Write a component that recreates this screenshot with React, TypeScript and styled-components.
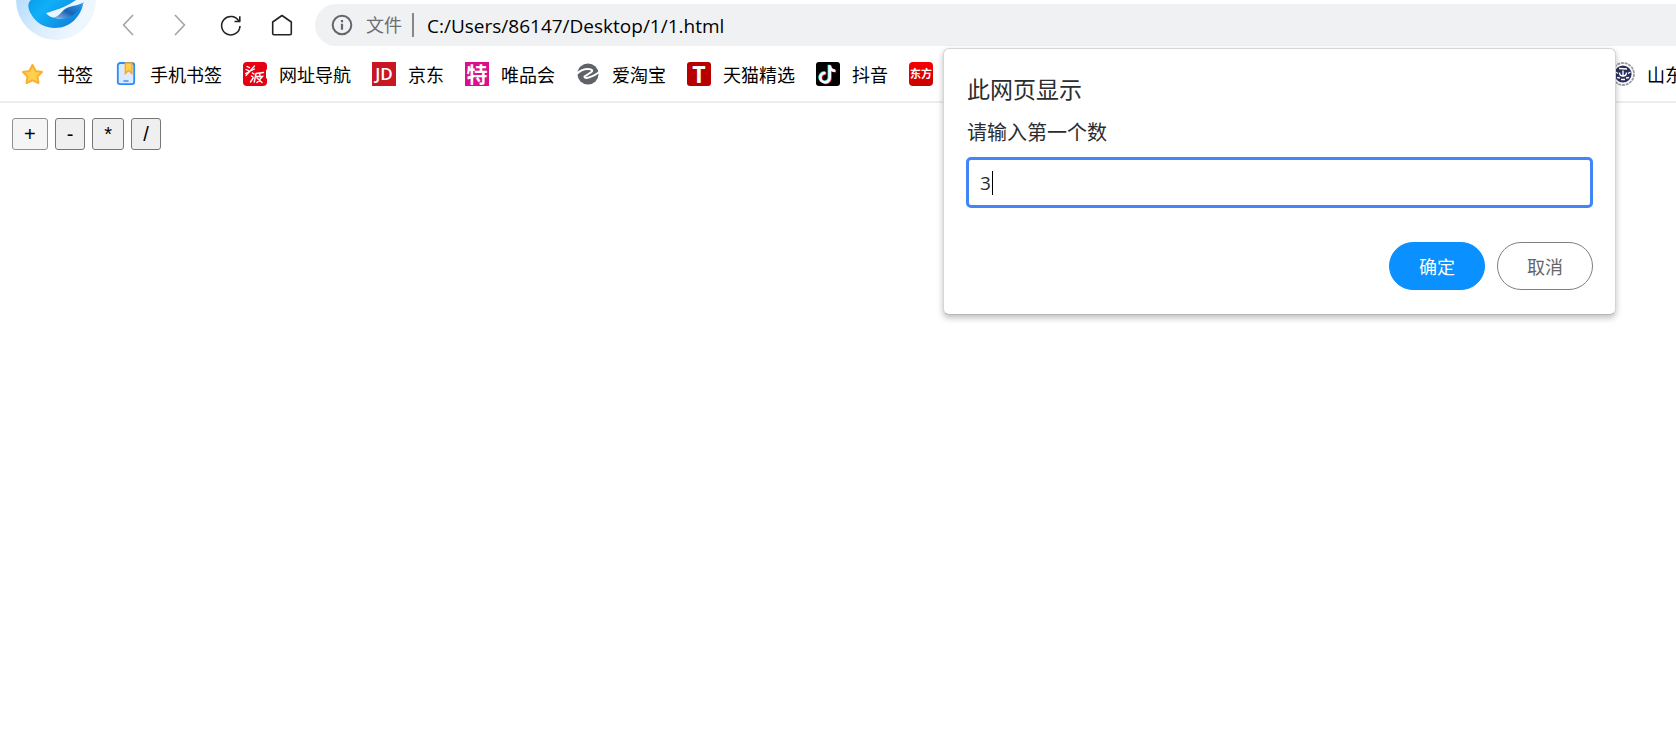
import React, { useState } from "react";
import styled, { createGlobalStyle, css } from "styled-components";

const uiFont = `"Open Sans", "Noto Sans CJK SC", sans-serif`;

const GlobalStyle = createGlobalStyle`
  *, *::before, *::after { box-sizing: border-box; }
  body { margin: 0; background: #fff; color: #000; font-family: ${uiFont}; }
  button, input { font-family: inherit; }
`;

const Browser = styled.div`
  position: relative;
  min-height: 100vh;
  overflow: hidden;
`;

const Toolbar = styled.header`
  display: flex;
  align-items: flex-start;
  height: 48px;
  padding-left: 16px;
`;

const LogoSvg = styled.svg`
  flex: none;
  display: block;
`;

const NavGroup = styled.nav`
  display: flex;
  gap: 27px;
  padding: 13px 21px 0;
`;

const NavButton = styled.button<{ $muted?: boolean }>`
  display: flex;
  width: 24px;
  height: 24px;
  padding: 0;
  border: 0;
  background: none;
  color: ${(p) => (p.$muted ? "#a3a3a3" : "#222")};
`;

const AddressBar = styled.div`
  flex: 1;
  display: flex;
  align-items: center;
  height: 42px;
  margin-top: 4px;
  padding-left: 16px;
  border-radius: 21px 0 0 21px;
  background: #f0f1f3;
`;

const Scheme = styled.label`
  margin-left: 13px;
  padding-right: 10px;
  border-right: 2px solid #86888b;
  color: #6b6d70;
  font-size: 18px;
  line-height: 24px;
`;

const UrlInput = styled.input`
  flex: 1;
  min-width: 0;
  margin-left: 13px;
  padding: 2px 0 0;
  border: 0;
  outline: 0;
  background: none;
  color: #000;
  font-size: 19px;
  line-height: 24px;
`;

const BookmarkBar = styled.nav`
  display: flex;
  justify-content: space-between;
  height: 55px;
  padding-left: 21px;
  border-bottom: 2px solid #ececec;
`;

const BookmarkList = styled.div`
  display: flex;
  gap: 21px;
`;

const Bookmark = styled.a<{ $clipped?: boolean }>`
  display: flex;
  align-items: center;
  gap: 12px;
  height: 52px;
  color: #000;
  font-size: 18px;
  line-height: 24px;
  white-space: nowrap;
  text-decoration: none;
  ${(p) =>
    p.$clipped &&
    css`
      width: 65px;
      overflow: hidden;
    `}
  svg { flex: none; }
`;

const BookmarkName = styled.span`
  padding-top: 2px;
`;

const Tile = styled.span<{ $bg: string; $size: number; $radius: number; $weight?: number }>`
  display: grid;
  place-items: center;
  flex: none;
  width: 24px;
  height: 24px;
  border-radius: ${(p) => p.$radius}px;
  background: ${(p) => p.$bg};
  color: #fff;
  font-size: ${(p) => p.$size}px;
  font-weight: ${(p) => p.$weight ?? 700};
  line-height: 24px;
`;

const Page = styled.main`
  display: flex;
  gap: 7px;
  padding: 15px 12px;
`;

const OperatorButton = styled.button`
  height: 32px;
  padding: 0 11px;
  border: 1px solid #767676;
  border-radius: 3px;
  background: #efefef;
  color: #000;
  font-family: "Liberation Sans", sans-serif;
  font-size: 20px;
  &:first-child {
    border-color: #8f8f8f;
    background: #f5f5f5;
  }
`;

const Dialog = styled.form`
  position: absolute;
  top: 48px;
  right: 60px;
  width: 673px;
  padding: 22px 22px 24px;
  border: 1px solid #d5d5d5;
  border-bottom-color: #b5b7b6;
  border-radius: 6px;
  background: #fff;
  box-shadow: 0 3px 6px rgba(0, 0, 0, 0.25);
`;

const DialogTitle = styled.h1`
  margin: 0;
  padding-left: 1px;
  color: #2b2c2e;
  font-size: 23px;
  font-weight: 400;
  line-height: 36px;
`;

const DialogLabel = styled.label`
  display: block;
  padding: 10px 1px 8px;
  color: #2b2c2e;
  font-size: 20px;
  line-height: 32px;
`;

const Field = styled.div`
  display: flex;
  align-items: center;
  height: 51px;
  padding: 0 11px;
  border: 3px solid #4285f4;
  border-radius: 5px;
`;

const FieldInput = styled.input`
  field-sizing: content;
  max-width: 100%;
  padding: 0;
  border: 0;
  outline: 0;
  color: #2b2c2e;
  font-size: 19px;
  line-height: 24px;
`;

const Caret = styled.span`
  width: 1px;
  height: 24px;
  margin-left: 1px;
  background: #000;
`;

const Actions = styled.div`
  display: flex;
  justify-content: flex-end;
  gap: 12px;
  padding-top: 34px;
`;

const ActionButton = styled.button<{ $primary?: boolean }>`
  width: 96px;
  height: 48px;
  padding: 2px 0 0;
  border: 1px solid ${(p) => (p.$primary ? "#0a90ff" : "#808080")};
  border-radius: 24px;
  background: ${(p) => (p.$primary ? "#0a90ff" : "#fff")};
  color: ${(p) => (p.$primary ? "#fff" : "#666")};
  font-size: 18px;
  line-height: 24px;
`;

const Logo = () => (
  <LogoSvg width="80" height="41" viewBox="0 0 80 41" aria-hidden="true">
    <defs>
      <linearGradient id="halo" gradientUnits="userSpaceOnUse" x1="4" y1="0" x2="60" y2="32">
        <stop offset="0" stopColor="#b9defc" />
        <stop offset="0.45" stopColor="#d9ecfd" />
        <stop offset="1" stopColor="#eff7fe" />
      </linearGradient>
      <linearGradient id="swirl" x1="0" y1="0" x2="1" y2="0.5">
        <stop offset="0" stopColor="#0a9cec" />
        <stop offset="0.35" stopColor="#0fb0f8" />
        <stop offset="1" stopColor="#1283dc" />
      </linearGradient>
      <linearGradient id="hook" x1="0" y1="1" x2="1" y2="0">
        <stop offset="0" stopColor="#8fc4ee" />
        <stop offset="0.45" stopColor="#1a62b4" />
        <stop offset="1" stopColor="#2f9df0" />
      </linearGradient>
    </defs>
    <circle cx="40" cy="0" r="40" fill="url(#halo)" />
    <path d="M15 0C11 3 12 9 15 14C20 23 29 28 39 28C54 28 65 17 67.500 2L60 0Z" fill="url(#swirl)" />
    <path d="M30 13C38 11 50 7 60 0H68L67.500 3C62 12 53 19 42 18.500C36 18 32 16 30 13Z" fill="#eaf5fe" />
    <path d="M37 17.500C44 17 45 10 53 7C58 5.500 63 5 67.500 2.500C64 11 55 19 45 18.700C42 18.600 39 18.200 37 17.500Z" fill="url(#hook)" />
  </LogoSvg>
);

const LineIcon = ({ d }: { d: string }) => (
  <svg width="24" height="24" viewBox="0 0 24 24" fill="none" stroke="currentColor" strokeWidth="1.6" strokeLinejoin="round" aria-hidden="true">
    <path d={d} />
  </svg>
);

const InfoIcon = () => (
  <svg width="22" height="22" viewBox="0 0 22 22" fill="none" stroke="#63666a" strokeWidth="2" aria-hidden="true">
    <circle cx="11" cy="11" r="9.3" />
    <path d="M11 9.8v6M11 6v2.2" strokeWidth="2.2" />
  </svg>
);

const StarIcon = () => (
  <svg width="24" height="24" viewBox="0 0 24 24" aria-hidden="true">
    <path d="M11.500 3L14.600 9L21 10L16.500 14.600L17.500 21L11.500 18.300L5.500 21L6.500 14.600L2 10L8.400 9Z" fill="#ffd04a" stroke="#fbaf35" strokeWidth="2" strokeLinejoin="round" />
  </svg>
);

const PhoneIcon = () => (
  <svg width="24" height="24" viewBox="0 0 24 24" aria-hidden="true">
    <rect x="3.800" y="1" width="16.400" height="21.200" rx="2.400" fill="#dce9fe" stroke="#2a8cf8" strokeWidth="1.800" />
    <path d="M11.300 1h6.600v10.500l-3.300-3-3.300 3Z" fill="#ffcf4d" stroke="#f5a623" strokeWidth="1.300" />
    <path d="M9.500 19h5" stroke="#2a8cf8" strokeWidth="1.400" />
  </svg>
);

const HeadlineIcon = () => (
  <svg width="24" height="24" viewBox="0 0 24 24" fill="none" stroke="#fff" strokeLinecap="round" aria-hidden="true">
    <rect width="24" height="24" rx="4" fill="#e60012" stroke="none" />
    <path d="M4 4.500l2.500 1.200M3 7.500l2.500 1.200M11.500 4L3 13.500M2.500 11.500L11.500 7" strokeWidth="1.300" />
    <path d="M9.500 11l1.500 1M8.500 14l1.500 1M7.500 20l2.700-4M13 11.500L11.300 20M13 11.500l7.500-1M13 14.500h6.500l-5.500 6M14 16l5 4.500M16.800 11v4" strokeWidth="1.400" />
    <path d="M23.500 8v8" strokeWidth="1" />
  </svg>
);

const TaobaoIcon = () => (
  <svg width="24" height="24" viewBox="0 0 24 24" aria-hidden="true">
    <ellipse cx="12" cy="12" rx="10.600" ry="10.500" fill="#5f6368" />
    <path d="M0 12.500C4 8.500 8 7 12 7C16.500 7 17 8.800 15 10.300L8.500 14.500C8 17 15 16.500 24 9.500" fill="none" stroke="#fff" strokeWidth="2" />
  </svg>
);

const DouyinIcon = () => (
  <svg width="24" height="24" viewBox="0 0 24 24" fill="none" strokeWidth="2.600" aria-hidden="true">
    <rect width="24" height="24" rx="3" fill="#000" />
    <path d="M12.900 2.800V14.800A4.700 4.700 0 1 1 8.700 10.500M12.900 3.500C13.300 6.500 15.500 8.300 18.500 8.300" stroke="#25f4ee" />
    <path d="M14.500 3.800V15.800A4.700 4.700 0 1 1 10.300 11.500M14.500 4.500C14.900 7.500 17.100 9.300 20.100 9.300" stroke="#fe2c55" />
    <path d="M13.700 3.300V15.300A4.700 4.700 0 1 1 9.500 11M13.700 4C14.100 7 16.300 8.800 19.300 8.800" stroke="#fff" />
  </svg>
);

const SealIcon = () => (
  <svg width="24" height="24" viewBox="0 0 24 24" fill="none" aria-hidden="true">
    <circle cx="12" cy="12" r="11" stroke="#9b9ba1" strokeWidth="1.800" strokeDasharray="3 0.800" />
    <circle cx="12" cy="12" r="8.600" fill="#2a3059" />
    <path d="M8.500 10.500C8.500 13 10 14 12 14C14 14 15.500 13 15.500 10.500M12 8.500V14M6 15.500l3 .5M18 15.500l-3 .5M8 6.500l8 .5M4.500 10l2.500 1.500M19.500 10L17 11.500M10 17.500h4" stroke="#fff" strokeWidth="1.400" />
  </svg>
);

const bookmarks: { name: string; icon: React.ReactNode }[] = [
  { name: "书签", icon: <StarIcon /> },
  { name: "手机书签", icon: <PhoneIcon /> },
  { name: "网址导航", icon: <HeadlineIcon /> },
  { name: "京东", icon: <Tile $bg="#c81623" $size={17} $radius={0} $weight={600}>JD</Tile> },
  { name: "唯品会", icon: <Tile $bg="#dd0e8c" $size={21} $radius={0}>特</Tile> },
  { name: "爱淘宝", icon: <TaobaoIcon /> },
  { name: "天猫精选", icon: <Tile $bg="#b80000" $size={23} $radius={3}>T</Tile> },
  { name: "抖音", icon: <DouyinIcon /> },
  { name: "", icon: <Tile $bg="linear-gradient(#f80000, #c80000)" $size={11} $radius={4}>东方</Tile> },
];

export default function App() {
  const [url, setUrl] = useState("C:/Users/86147/Desktop/1/1.html");
  const [value, setValue] = useState("3");

  return (
    <Browser>
      <GlobalStyle />
      <Toolbar>
        <Logo />
        <NavGroup>
          <NavButton type="button" aria-label="后退" $muted><LineIcon d="M16 2L6.500 12L16 22" /></NavButton>
          <NavButton type="button" aria-label="前进" $muted><LineIcon d="M7 2L16.500 12L7 22" /></NavButton>
          <NavButton type="button" aria-label="刷新"><LineIcon d="M20 8.500A9.200 9.200 0 1 0 21 13M20.800 3.200V8.500H15.500" /></NavButton>
          <NavButton type="button" aria-label="主页"><LineIcon d="M12 2.500L21.300 9V20.500Q21.300 21.700 20.100 21.700H3.900Q2.700 21.700 2.700 20.500V9Z" /></NavButton>
        </NavGroup>
        <AddressBar>
          <InfoIcon />
          <Scheme htmlFor="url">文件</Scheme>
          <UrlInput id="url" value={url} onChange={(e) => setUrl(e.target.value)} />
        </AddressBar>
      </Toolbar>
      <BookmarkBar>
        <BookmarkList>
          {bookmarks.map((b, i) => (
            <Bookmark key={i} href="#">
              {b.icon}
              {b.name && <BookmarkName>{b.name}</BookmarkName>}
            </Bookmark>
          ))}
        </BookmarkList>
        <Bookmark href="#" $clipped>
          <SealIcon />
          <BookmarkName>山东</BookmarkName>
        </Bookmark>
      </BookmarkBar>
      <Page>
        {["+", "-", "*", "/"].map((op) => (
          <OperatorButton key={op} type="button">{op}</OperatorButton>
        ))}
      </Page>
      <Dialog role="dialog" aria-labelledby="prompt-title" onSubmit={(e) => e.preventDefault()}>
        <DialogTitle id="prompt-title">此网页显示</DialogTitle>
        <DialogLabel htmlFor="prompt-value">请输入第一个数</DialogLabel>
        <Field>
          <FieldInput id="prompt-value" value={value} onChange={(e) => setValue(e.target.value)} />
          <Caret />
        </Field>
        <Actions>
          <ActionButton type="submit" $primary>确定</ActionButton>
          <ActionButton type="button">取消</ActionButton>
        </Actions>
      </Dialog>
    </Browser>
  );
}
